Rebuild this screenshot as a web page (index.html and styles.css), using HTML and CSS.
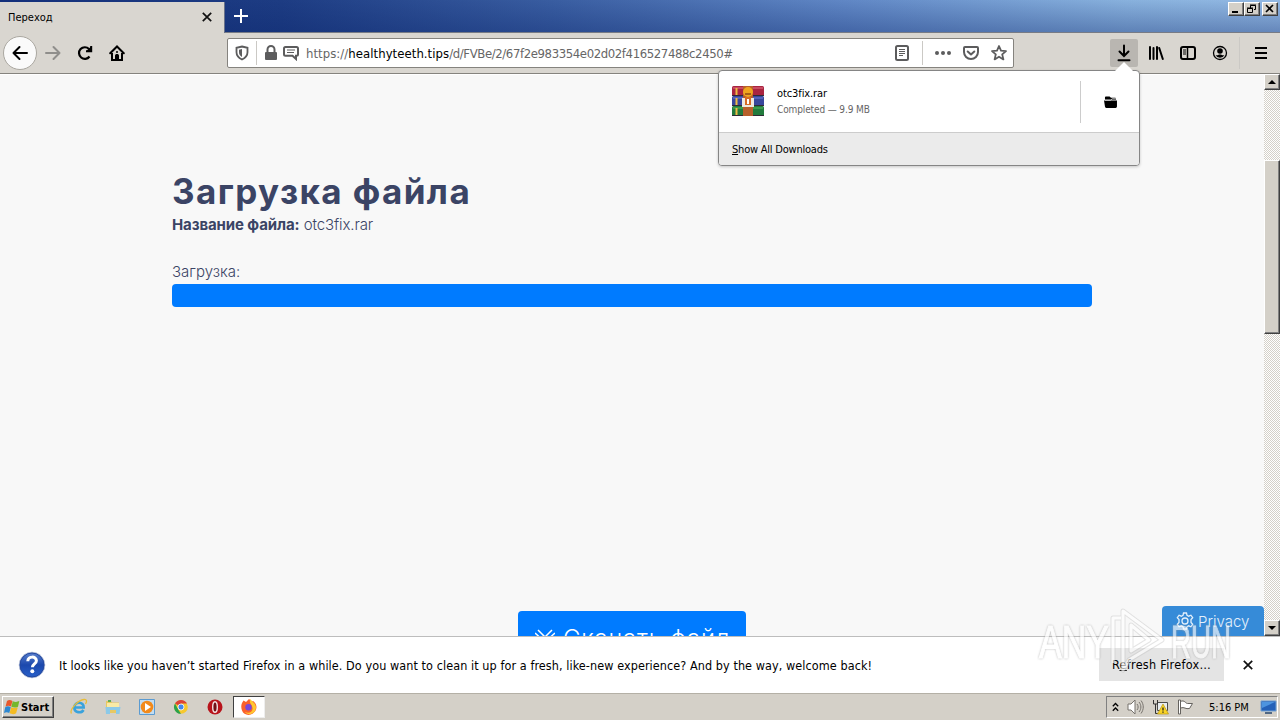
FILE: index.html
```html
<!DOCTYPE html>
<html lang="ru">
<head>
  <meta charset="UTF-8">
  <meta name="viewport" content="width=device-width, initial-scale=1.0">
  <title>Переход</title>
  <link rel="stylesheet" href="styles.css">
</head>
<body>
  <div class="screen">
    <header class="titlebar">
      <div class="tab">
        <span class="tab-title">Переход</span>
        <svg class="tab-close" width="10" height="10" viewBox="0 0 10 10"><path d="M.8.8l8.4 8.4M9.2.8L.8 9.2" stroke="#111" stroke-width="1.7"/></svg>
      </div>
      <svg class="new-tab" width="14" height="14" viewBox="0 0 14 14"><path d="M7 0v14M0 7h14" stroke="#fff" stroke-width="2"/></svg>
      <div class="window-controls">
        <button class="bevel"><svg width="12" height="10"><path d="M2 8h6" stroke="#000" stroke-width="2"/></svg></button>
        <button class="bevel restore"><svg width="12" height="10" fill="none" stroke="#000"><path d="M4.5 4V1.500h5v4H8M4 1h6M1.500 4.500h5v4h-5zM1 4h6"/></svg></button>
        <button class="bevel"><svg width="12" height="10"><path d="M2 1l7 7M9 1L2 8" stroke="#000" stroke-width="1.600"/></svg></button>
      </div>
    </header>

    <nav class="toolbar">
      <div class="nav-buttons">
        <span class="back"><svg width="16" height="16" viewBox="0 0 16 16" fill="none" stroke="#000" stroke-width="2" stroke-linecap="round" stroke-linejoin="round"><path d="M15 8H1.500M7.500 2l-6 6 6 6"/></svg></span>
        <svg width="16" height="16" viewBox="0 0 16 16" fill="none" stroke="#8f8e8b" stroke-width="2" stroke-linecap="round" stroke-linejoin="round"><path d="M1 8h13.500M8.500 2l6 6-6 6"/></svg>
        <svg width="16" height="16" viewBox="0 0 16 16" fill="none" stroke="#000" stroke-width="2.200"><path d="M12.500 11.500A5.800 5.800 0 1 1 12 4l1 1.200"/><path d="M14.200 1v5.300H9" stroke-width="2"/><path d="M14.500 1v5.500H9z" fill="#000" stroke="none"/></svg>
        <svg width="16" height="16" viewBox="0 0 16 16"><path d="M1.200 8.300L8 1.500l6.800 6.800" fill="none" stroke="#000" stroke-width="2" stroke-linecap="round"/><path d="M3 8v7h10V8" fill="none" stroke="#000" stroke-width="2"/><path d="M6 15v-4.500c0-2 4-2 4 0V15z"/><path d="M8 6v2" stroke="#000" stroke-width="1.500"/></svg>
      </div>

      <div class="urlbar">
        <svg class="shield" width="14" height="16" viewBox="0 0 14 16"><path d="M7 1.500l5.500 1.300v4.400c0 3.500-2.500 5.800-5.500 7.300-3-1.500-5.500-3.800-5.500-7.300V2.800z" fill="none" stroke="#5c5c5d" stroke-width="1.800"/><path d="M7 4v8C5 10.700 4 9.500 4 7V4.700z" fill="#5c5c5d"/></svg>
        <i class="rule"></i>
        <svg width="14" height="16" viewBox="0 0 14 16"><rect x="1" y="7" width="12" height="8" rx="1" fill="#5c5c5d"/><path d="M3.500 8V4.500a3.500 3.500 0 0 1 7 0V8" fill="none" stroke="#5c5c5d" stroke-width="2"/></svg>
        <svg class="bubble" width="16" height="16" viewBox="0 0 16 16" fill="none" stroke="#5c5c5d"><path d="M2.500 2h11a1.500 1.500 0 0 1 1.500 1.500v5.800a1.500 1.500 0 0 1-1.500 1.500H13V14l-3.500-3.200h-7A1.500 1.500 0 0 1 1 9.300V3.500A1.500 1.500 0 0 1 2.500 2z" stroke-width="2"/><path d="M4 5h8M4 7.500h7"/></svg>
        <span class="url">https://<b>healthyteeth.tips</b><span class="url-path">/d/FVBe/2/67f2e983354e02d02f416527488c2450#</span></span>
        <div class="url-actions">
          <svg width="14" height="16" viewBox="0 0 14 16" fill="none" stroke="#5c5c5d"><rect x="1" y="1" width="12" height="14" rx="1.500" stroke-width="2"/><path d="M4 4.500h6M4 6.500h6M4 8.500h6M4 10.500h4"/></svg>
          <i class="rule"></i>
          <svg width="16" height="16" viewBox="0 0 16 16" fill="#5c5c5d"><circle cx="2" cy="8" r="2"/><circle cx="8" cy="8" r="2"/><circle cx="14" cy="8" r="2"/></svg>
          <svg width="16" height="16" viewBox="0 0 16 16" fill="none" stroke="#5c5c5d" stroke-width="2" stroke-linecap="round" stroke-linejoin="round"><path d="M2 2h12a1 1 0 0 1 1 1v4a7 7 0 0 1-14 0V3a1 1 0 0 1 1-1z"/><path d="M4.700 6.500L8 9.500l3.300-3"/></svg>
          <svg width="16" height="16" viewBox="0 0 16 16" fill="none" stroke="#5c5c5d" stroke-width="1.800" stroke-linejoin="round"><path d="M8 1l2 4.700 5 .4-3.800 3.300 1.200 5L8 11.700l-4.400 2.700 1.200-5L1 6.100l5-.4z"/></svg>
        </div>
      </div>

      <div class="tools">
        <span class="download-button"><svg width="16" height="18" viewBox="0 0 16 18" fill="none" stroke="#000" stroke-width="2" stroke-linecap="round"><path d="M8 1.500v10M3.500 7.500L8 12l4.500-4.500M2.500 16.200h11"/></svg></span>
        <svg width="16" height="16" viewBox="0 0 16 16" stroke="#000" stroke-width="2" stroke-linecap="round"><path d="M2 2v12M5.500 3v11M9 2v12M11.200 3l3.600 11"/></svg>
        <svg width="16" height="16" viewBox="0 0 16 16" fill="none" stroke="#000"><rect x="1" y="2" width="14" height="12" rx="2" stroke-width="2"/><path d="M7.500 2v12" stroke-width="1.500"/><path d="M3 5h3M3 7h3M3 9h3"/></svg>
        <svg width="16" height="16" viewBox="0 0 16 16"><circle cx="8" cy="8" r="6.500" fill="none" stroke="#000" stroke-width="1.300"/><circle cx="8" cy="6" r="2.800"/><path d="M3.500 10c2 .8 2.500-.5 4.500-.5s2.500 1.300 4.500.5A5 5 0 0 1 3.500 10z"/></svg>
        <i class="rule"></i>
        <svg width="14" height="14" viewBox="0 0 14 14" stroke="#000" stroke-width="2"><path d="M1 2h12M1 7h12M1 12h12"/></svg>
      </div>
    </nav>

    <main class="viewport">
      <div class="page">
        <div class="container">
          <h1>Загрузка файла</h1>
          <p class="file-name"><b>Название файла:</b> <span>otc3fix.rar</span></p>
          <p class="progress-label">Загрузка:</p>
          <div class="progress"></div>
        </div>
        <a class="download-link"><svg width="20" height="20" viewBox="0 0 20 20" fill="none" stroke="#fff" stroke-width="1.500"><path d="M0 5l10 9 10-9M3 2l14 14M17 2L3 16"/></svg><span>Скачать файл</span></a>
        <a class="privacy"><svg width="18" height="18" viewBox="0 0 18 18" fill="none" stroke="#e4f0fb" stroke-width="1.300"><path d="M7.500 1h3l.5 2.300 1.700.9 2.200-1 1.800 2.500L15 7.600v2.800l1.700 1.900-1.800 2.500-2.200-1-1.700.9-.5 2.300h-3L7 14.700l-1.700-.9-2.200 1-1.800-2.500L3 10.400V7.600L1.300 5.700l1.800-2.500 2.200 1L7 3.300z"/><circle cx="9" cy="9" r="3"/></svg><span>Privacy</span></a>
      </div>
      <div class="scrollbar">
        <span class="bevel arrow"><svg width="8" height="4"><path d="M0 4l4-4 4 4z"/></svg></span>
        <span class="bevel thumb"></span>
        <span class="bevel arrow"><svg width="8" height="4"><path d="M0 0l4 4 4-4z"/></svg></span>
      </div>
    </main>

    <section class="notification">
      <svg width="28" height="28" viewBox="0 0 28 28">
        <defs><linearGradient id="help" x2="0" y2="1"><stop stop-color="#5d83cf"/><stop offset=".5" stop-color="#1b48ad"/><stop offset="1" stop-color="#2a62cb"/></linearGradient></defs>
        <circle cx="14" cy="14" r="12.800" fill="url(#help)" stroke="#bac3d8"/><circle cx="14" cy="14" r="12" fill="none" stroke="#2549a0"/>
        <path d="M9.800 10.200c0-5.500 8.600-5.200 8.600-.5 0 3.200-4 3.200-4 6.500" fill="none" stroke="#fff" stroke-width="3"/><circle cx="14.300" cy="20.300" r="2" fill="#fff"/>
      </svg>
      <span class="notice">It looks like you haven’t started Firefox in a while. Do you want to clean it up for a fresh, like-new experience? And by the way, welcome back!</span>
      <button class="refresh"><span>R<u>e</u>fresh Firefox…</span></button>
      <svg class="dismiss" width="10" height="10" viewBox="0 0 10 10"><path d="M.8.8l8.400 8.400M9.200.8L.8 9.200" stroke="#111" stroke-width="1.700"/></svg>
    </section>

    <footer class="taskbar">
      <div class="start bevel">
        <svg width="17" height="16" viewBox="0 0 17 16"><path d="M3 2c2-1.500 3.500-1 5.500 0L7 7.500c-2-1-3.500-1-5.500.2z" fill="#e8582c"/><path d="M8.800 2.200c2 .9 4.200 1 6.500-.1L14 7.700c-2 1.200-4.500 1-6.700 0z" fill="#75b72b"/><path d="M1.200 8.200c2-1.200 3.500-1.200 5.600 0L5.300 14c-2-1.100-3.600-1-5.300.1z" fill="#2e88d1"/><path d="M7.200 8.300c2 1 4.400 1 6.600-.1l-1.700 6.100c-2 1.200-4.400 1-6.500 0z" fill="#f4bb22"/></svg>
        <span>Start</span>
      </div>
      <div class="quick-launch">
        <svg width="18" height="18" viewBox="0 0 18 18" fill="none"><path d="M4.500 9.500h9.200C14 3.300 4.500 3 4.300 9.500 4.300 15 11.500 15.500 13.500 12" stroke="#39a2dc" stroke-width="2.600"/><path d="M1.500 15.500C-1 12 8 2 14 1.500c3-.3 3 2 1.500 4.500" stroke="#e9bd38" stroke-width="1.300"/></svg>
        <svg width="18" height="18" viewBox="0 0 18 18"><path d="M2 3h5l1 1.500h7V15H2z" fill="#e7c862"/><path d="M3 5h12v6H3z" fill="#f9eaa5"/><path d="M1.500 9h15l-1 7H12v-4H6v4H2z" fill="#8bc9e8"/><path d="M4 3h3" stroke="#5eac57" stroke-width="2"/></svg>
        <svg width="18" height="18" viewBox="0 0 18 18"><path d="M1.500 1.500h15v15h-15z" fill="#c2ddf2" stroke="#5b9bd1"/><circle cx="9" cy="9" r="6.300" fill="#f28a1b"/><path d="M7 5l6 4-6 4z" fill="#fff"/></svg>
        <svg width="18" height="18" viewBox="0 0 18 18"><circle cx="9" cy="9" r="6.800" fill="#f7c82d"/><path d="M9 9L3 5.500a6.800 6.800 0 0 1 12 0H9z" fill="#dc4237"/><path d="M3 5.500L6.500 12l2.500 3.800A6.800 6.800 0 0 1 3 5.500z" fill="#2ba24c"/><circle cx="9" cy="9" r="3" fill="#4388ef" stroke="#fff" stroke-width=".8"/></svg>
        <svg width="18" height="18" viewBox="0 0 18 18"><circle cx="9" cy="9" r="7.500" fill="#b8131b"/><ellipse cx="9" cy="9" rx="2.300" ry="5.300" fill="#721016" stroke="#f3e4e4" stroke-width="1.400"/></svg>
      </div>
      <div class="task-active">
        <svg width="18" height="18" viewBox="0 0 18 18"><path d="M2 5l1.500-2.500L6 4l3-3 3 2.500 1-.5c3.500 2.500 4 6 3 8.500-2.500 7-12 7-14 1C1 10 1 7 2 5z" fill="#fb602b"/><path d="M10 1l3 3c3.500 3 3.500 6 2 9-2.500 4-8 4-10 1 5 2 8-1 7.500-4C12 6 9 6 10 1z" fill="#ffc72f"/><circle cx="8.500" cy="9.300" r="3.200" fill="#7748d9"/></svg>
      </div>
      <div class="tray">
        <svg width="7" height="10" viewBox="0 0 7 10" fill="none" stroke="#000" stroke-width="1.300"><path d="M.8 4.200l2.700-2.700 2.700 2.700M.8 8.700L3.500 6l2.700 2.700"/></svg>
        <svg width="17" height="16" viewBox="0 0 17 16" fill="none" stroke="#77736d"><path d="M1 5h3l4-4v14l-4-4H1z" fill="#fff"/><path d="M10 5c1.500 2 1.500 4 0 6M12 3c2.500 3 2.500 7 0 10M14 1.500c3 4 3 9 0 13"/></svg>
        <svg width="17" height="16" viewBox="0 0 17 16"><path d="M5.500 3.500h10v8h-10z" fill="#e9edf0" stroke="#4b4b4b"/><path d="M1.500 1v4h4V1M3.500 5v9.500h6" fill="none" stroke="#333"/><path d="M11 5l5.500 10h-11z" fill="#f9d426" stroke="#b79613" stroke-width=".7"/><path d="M11 8.500v3M11 12.500v1.300" stroke="#222" stroke-width="1.300"/></svg>
        <svg width="17" height="16" viewBox="0 0 17 16" fill="#fff" stroke="#65625e"><path d="M1.500 1v14h2V1zM3.500 2.500c4-2 5 2 7 2h5l-3 5c-4 1-5-2-9-.5z"/></svg>
        <span class="clock">5:16 PM</span>
        <svg width="17" height="14" viewBox="0 0 17 14"><path d="M1 1h15v10H1z" fill="#2461b8" stroke="#6f9fd2"/><path d="M2 2h13L2 8z" fill="#4d94df"/><path d="M5 13h7" stroke="#26466e" stroke-width="1.500"/></svg>
      </div>
    </footer>

    <aside class="downloads-panel">
      <svg class="panel-arrow" width="20" height="10" viewBox="0 0 20 10"><path d="M0 10L10 0l10 10z" fill="#fff"/></svg>
      <div class="download-item">
        <svg class="archive" width="34" height="32" viewBox="0 0 34 32">
          <rect x="1" y="1" width="32" height="10" rx="1.500" fill="#a92540"/><path d="M2 3h30" stroke="#c84a62" stroke-width="2"/>
          <rect x="1" y="11" width="32" height="10" rx="1.500" fill="#38479c"/><path d="M2 13h30" stroke="#5264bb" stroke-width="2"/>
          <rect x="1" y="21" width="32" height="10" rx="1.500" fill="#227b3d"/><path d="M2 23h30" stroke="#3b9a4b" stroke-width="2"/>
          <path d="M1 10.500h32M1 20.500h32M1 30.500h32" stroke="#302b35"/><path d="M5.500 3v7M5.500 13v7M5.500 23v7" stroke="#efbc45" stroke-width="2"/>
          <path d="M12 1h10v30H12z" fill="#b7602b"/><circle cx="17" cy="7" r="5" fill="#f0a51f"/><path d="M14 9h6" stroke="#8f4a16" stroke-width="1.500"/>
          <path d="M11 13h12v9H11z" fill="#eee9e0"/><path d="M14 12h6v8h-6z" fill="#d66b24"/><path d="M17 14v5" stroke="#fff" stroke-width="2"/>
        </svg>
        <div class="download-text">
          <span class="download-name">otc3fix.rar</span>
          <span class="download-status">Completed — 9.9 MB</span>
        </div>
        <div class="folder"><svg width="13" height="12" viewBox="0 0 14 13"><path d="M1 4V1.500Q1 .5 2 .5h4L7.500 2H12q1 0 1 1v1z"/><path d="M0 5h14v6.500Q14 13 12.500 13h-10Q1 13 1 11.500z"/><path d="M1 4.500h6l2-1.500h4" fill="none" stroke="#fff" stroke-width=".8"/></svg></div>
      </div>
      <div class="show-all"><span><u>S</u>how All Downloads</span></div>
    </aside>

    <svg class="watermark" width="200" height="70" viewBox="0 0 200 70">
      <g class="mark-edge">
        <text x="2" y="51" textLength="70" lengthAdjust="spacingAndGlyphs">ANY</text>
        <text x="134" y="51" textLength="60" lengthAdjust="spacingAndGlyphs">RUN</text>
      </g>
      <g fill="none" stroke-linejoin="round">
        <path d="M76 56V11h8M86 63V4l39 29-33 20zM94 44V18l18 15z" stroke="#bdbdbd" stroke-opacity=".6" stroke-width="5"/>
        <path d="M76 56V11h8M86 63V4l39 29-33 20zM94 44V18l18 15z" stroke="#fff" stroke-width="3"/>
      </g>
    </svg>
  </div>
</body>
</html>
```
FILE: styles.css
```css
:root {
  --chrome: #d9d6d0;
  --task: #d4d0c8;
  --ink: #3b4465;
  --blue: #007bff;
  --font-ui: "DejaVu Sans Condensed", "DejaVu Sans", sans-serif;
  --font-page: Inter, sans-serif;
}

* {
  box-sizing: border-box;
}

body {
  margin: 0;
  font-family: var(--font-ui);
  font-size: 11px;
  color: #000;
}

svg {
  display: block;
  flex: none;
}

.screen {
  position: relative;
  width: 1280px;
  height: 720px;
  overflow: hidden;
  display: flex;
  flex-direction: column;
  white-space: nowrap;
}

button {
  padding: 0;
  font: inherit;
}

.bevel {
  background: var(--task);
  border: 1px solid;
  border-color: #fff #404040 #404040 #fff;
  box-shadow: inset -1px -1px #808080;
}

/* title bar */
.titlebar {
  height: 33px;
  display: flex;
  align-items: center;
  border-bottom: 1px solid #777b85;
  background: linear-gradient(#0000 0%, #0a246a55 100%), linear-gradient(90deg, #14307b 0%, #1d3c83 22%, #395da1 43%, #6087c5 66%, #88b1dd 88%, #93b9e3 100%);
}

.tab {
  width: 225px;
  height: 31px;
  margin-top: 3px;
  padding: 0 12px 1px 8px;
  display: flex;
  align-items: center;
  justify-content: space-between;
  background: var(--chrome);
  border-right: 1px solid #69728a;
}

.new-tab {
  margin-left: 9px;
}

.window-controls {
  display: flex;
  align-self: flex-start;
  margin: 2px 2px 0 auto;
}

.window-controls button {
  width: 16px;
  height: 14px;
  padding: 1px;
}

.restore {
  margin-right: 2px;
}

/* toolbar */
.toolbar {
  height: 41px;
  display: flex;
  align-items: center;
  background: var(--chrome);
  border-bottom: 1px solid #85837e;
}

.nav-buttons {
  width: 227px;
  padding-left: 3px;
  display: flex;
  align-items: center;
  gap: 16px;
}

.back {
  width: 34px;
  height: 34px;
  margin-right: -8px;
  display: grid;
  place-items: center;
  border: 1px solid #aaa7a0;
  border-radius: 50%;
  background: #fafafa;
}

.rule {
  width: 1px;
  height: 24px;
  background: #cbc9c5;
}

.urlbar {
  width: 787px;
  height: 30px;
  display: flex;
  align-items: center;
  padding: 0 6px 0 7px;
  border: 1px solid #85837e;
  border-radius: 2px;
  background: #fff;
}

.urlbar > .rule {
  margin: 0 7px;
}

.bubble {
  margin-left: 5px;
}

.url {
  margin-left: 7px;
  font-size: 13px;
  letter-spacing: 0.05px;
  color: #666;
}

.url b {
  font-weight: normal;
  color: #000;
}

.url-path {
  letter-spacing: -0.39px;
}

.url-actions {
  margin-left: auto;
  display: flex;
  align-items: center;
  gap: 12px;
}

.url-actions .rule {
  margin-left: 1px;
}

.tools {
  margin-left: auto;
  padding-right: 12px;
  display: flex;
  align-items: center;
  gap: 16px;
}

.download-button {
  width: 28px;
  height: 28px;
  margin-right: -6px;
  display: grid;
  place-items: center;
  border-radius: 2px;
  background: #b9b6b1;
}

.tools .rule {
  height: 32px;
  margin: 0 -2px 0 -5px;
}

/* web page */
.viewport {
  height: 562px;
  display: flex;
}

.page {
  position: relative;
  flex: 1;
  overflow: hidden;
  background: #f8f8f8;
  border-top: 1px solid #fff;
  font-family: var(--font-page);
  color: var(--ink);
}

.container {
  width: 920px;
  margin-left: 172px;
  padding-top: 94px;
}

h1 {
  margin: 0;
  font-size: 35px;
  line-height: 44px;
  font-weight: 700;
  letter-spacing: 1.4px;
}

p {
  margin: 0;
  font-size: 15px;
  line-height: 24px;
}

.file-name {
  letter-spacing: -0.1px;
}

.file-name span,
.progress-label {
  font-weight: 300;
}

.progress-label {
  margin-top: 23px;
}

.progress {
  height: 23px;
  border-radius: 4px;
  background: var(--blue);
}

.download-link {
  position: absolute;
  left: 518px;
  top: 536px;
  width: 228px;
  height: 54px;
  display: flex;
  align-items: center;
  gap: 8px;
  padding-left: 17px;
  border-radius: 4px;
  background: var(--blue);
  color: #fff;
  font-size: 24px;
  font-weight: 300;
  letter-spacing: 0.8px;
}

.privacy {
  position: absolute;
  right: 0;
  bottom: 0;
  width: 102px;
  height: 30px;
  display: flex;
  align-items: center;
  gap: 4px;
  padding-left: 14px;
  border-radius: 4px 4px 0 0;
  background: #368bd8;
  color: #e4f0fb;
  font-size: 15px;
  font-weight: 300;
}

.scrollbar {
  width: 16px;
  display: flex;
  flex-direction: column;
  background: repeating-conic-gradient(#fff 0 25%, #d4d0c8 0 50%) 0 0 / 2px 2px;
}

.arrow {
  height: 16px;
  display: grid;
  place-items: center;
}

.thumb {
  height: 174px;
  margin: 70px 0 auto;
}

/* notification bar */
.notification {
  height: 57px;
  display: flex;
  align-items: center;
  padding-left: 18px;
  border-top: 1px solid #bdbdbd;
  background: #fff;
}

.notice {
  margin-left: 13px;
  font-size: 12.5px;
  letter-spacing: 0.08px;
}

.refresh {
  width: 125px;
  height: 33px;
  margin: -1px 0 0 auto;
  border: 0;
  background: #e4e4e4;
  font-size: 12.5px;
  letter-spacing: 0.3px;
}

.dismiss {
  margin: 0 27px 0 19px;
}

/* taskbar */
.taskbar {
  height: 27px;
  display: flex;
  align-items: center;
  padding: 0 2px;
  background: var(--task);
  border-top: 1px solid #b4b0a6;
}

.start {
  width: 52px;
  height: 22px;
  display: flex;
  align-items: center;
  gap: 0;
  padding-left: 1px;
  font-weight: bold;
}

.quick-launch {
  display: flex;
  gap: 16px;
  margin-left: 16px;
}

.task-active {
  width: 32px;
  height: 22px;
  margin-left: 9px;
  display: grid;
  place-items: center;
  background: #fff;
  border: 1px solid;
  border-color: #404040 #eee #eee #404040;
}

.tray {
  width: 172px;
  height: 22px;
  margin-left: auto;
  padding: 0 1px 0 5px;
  display: flex;
  align-items: center;
  gap: 8px;
  border: 1px solid;
  border-color: #808080 #fff #fff #808080;
}

.clock {
  margin: 0 3px 0 7px;
}

/* downloads popup */
.downloads-panel {
  position: absolute;
  left: 718px;
  top: 70px;
  width: 422px;
  height: 96px;
  border: 1px solid #858585;
  border-radius: 4px;
  background: #fff;
  box-shadow: 0 1px 3px #0003;
}

.panel-arrow {
  position: absolute;
  left: 395px;
  top: -9px;
}

.download-item {
  height: 61px;
  display: flex;
  align-items: center;
  padding-left: 12px;
}

.archive {
  margin-top: -2px;
}

.download-text {
  margin-left: 12px;
  display: flex;
  flex-direction: column;
  gap: 4px;
}

.download-name {
  line-height: 13px;
  letter-spacing: -0.1px;
}

.download-status {
  font-size: 10px;
  line-height: 12px;
  letter-spacing: -0.12px;
  color: #666;
}

.folder {
  width: 59px;
  height: 42px;
  margin-left: auto;
  display: grid;
  place-items: center;
  border-left: 1px solid #ccc;
}

.show-all {
  height: 33px;
  display: flex;
  align-items: center;
  padding-left: 13px;
  border-top: 1px solid #ccc;
  border-radius: 0 0 3px 3px;
  background: #ebebeb;
  letter-spacing: -0.22px;
}

/* translucent logo over everything */
.watermark {
  position: absolute;
  left: 1037px;
  top: 607px;
  opacity: .65;
}

.mark-edge {
  font: 46px "Liberation Sans", sans-serif;
  fill: #fff;
  stroke: #fff;
  stroke-width: 1px;
  filter: drop-shadow(0 0 1px #999);
}
```
